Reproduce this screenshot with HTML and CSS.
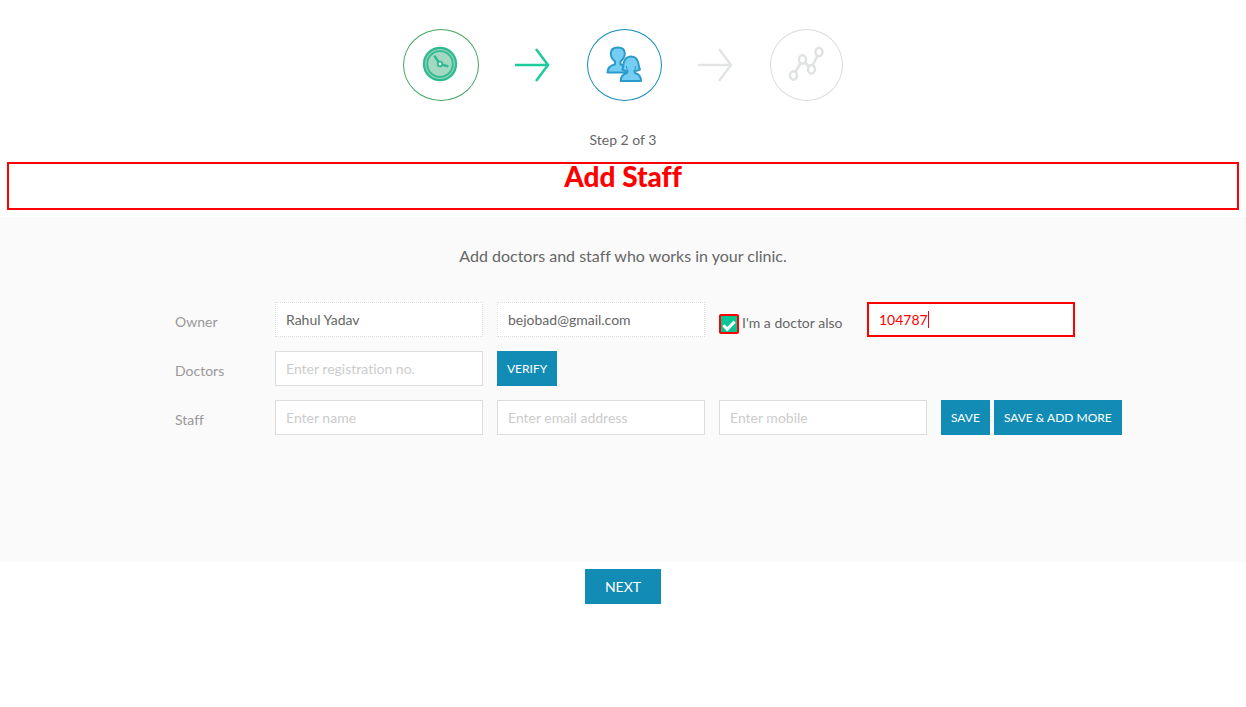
FILE: index.html
```html
<!DOCTYPE html>
<html lang="en">
<head>
<meta charset="utf-8">
<title>Add Staff</title>
<link rel="stylesheet" href="styles.css">
</head>
<body>
<header class="steps">
  <span class="step step-done">
    <svg width="36" height="36" viewBox="0 0 36 36" fill="none" stroke="#2fba91">
      <circle cx="18" cy="18" r="16" fill="#a3d9c3" stroke-width="2.4"/>
      <circle cx="18" cy="18" r="14.3" stroke="#8fd3b9" stroke-width="1"/>
      <circle cx="18" cy="18" r="12.8" stroke-width="1.8"/>
      <path d="M17 16.500L12.800 10.500M19.500 18.500L25.500 20.200" stroke-width="2.400" stroke-linecap="round"/>
      <circle cx="18" cy="18" r="2.300" fill="#e6f7f0" stroke-width="1.800"/>
    </svg>
  </span>
  <svg class="arrow arrow-done" width="36" height="36" viewBox="0 0 36 36"><path d="M0 18H33M21 2L33 18L21 34"/></svg>
  <span class="step step-current">
    <svg width="36" height="36" viewBox="0 0 36 36" fill="#74cdf2" stroke="#2a9bc8" stroke-width="2" stroke-linejoin="round">
      <path d="M1.500 26.500C1.500 21.500 4 19.500 9 18.200V15.500C6.500 13.500 4.800 10.500 4.800 7.500C4.800 3.500 7.500 1.500 11.800 1.500S18.800 3.500 18.800 7.500C18.800 10.500 17 13.500 14.500 15.500V18.200C18 19 21 20.500 21 26.500Z"/>
      <path d="M14.700 35C14.700 30.500 17 28.200 21 27L21.500 25C19.500 25 17.500 24.500 16.300 23.500C17.800 21 17 19 17.800 16.500C19 12.500 21.500 10.500 25 10.500S31.200 12.500 32.200 16.500C33 19 32.500 21 34 23.500C32.500 24.500 31 25 28.500 25L29 27C33 28.200 35 30.500 35 35Z"/>
      <path d="M20.500 20C20.600 22.500 21 24 22 25.500M29.500 20C29.400 22.500 29 24 28 25.500" fill="none" stroke-width="1"/>
    </svg>
  </span>
  <svg class="arrow" width="36" height="36" viewBox="0 0 36 36"><path d="M0 18H33M21 2L33 18L21 34"/></svg>
  <span class="step">
    <svg width="36" height="36" viewBox="0 0 36 36" fill="none" stroke="#e1e3e3" stroke-width="2.600">
      <ellipse cx="5.500" cy="29.500" rx="3.500" ry="4.200"/>
      <ellipse cx="14.500" cy="13.500" rx="3.500" ry="4.200"/>
      <ellipse cx="23.500" cy="23.300" rx="3.500" ry="4.200"/>
      <ellipse cx="31" cy="6" rx="3.500" ry="4.200"/>
      <path d="M7.500 25.500L12.500 17.500M17 16.500L21 20.500M25 19L29.300 10"/>
    </svg>
  </span>
</header>
<p class="step-count">Step 2 of 3</p>
<h1 class="title">Add Staff</h1>
<main class="panel">
  <p class="intro">Add doctors and staff who works in your clinic.</p>
  <form class="staff-form" id="staff-form">
    <div class="row">
      <label class="row-label" for="owner">Owner</label>
      <input class="field field-fixed" id="owner" type="text" value="Rahul Yadav" readonly>
      <input class="field field-fixed" type="email" aria-label="Owner email" value="bejobad@gmail.com" readonly>
      <div class="doctor">
        <input class="check" id="also" type="checkbox" checked>
        <label class="check-label" for="also">I'm a doctor also</label>
      </div>
      <div class="active">
        <input class="field field-active" type="text" aria-label="Owner registration no." value="104787">
        <span class="caret"></span>
      </div>
    </div>
    <div class="row">
      <label class="row-label" for="doctors">Doctors</label>
      <input class="field" id="doctors" type="text" placeholder="Enter registration no.">
      <button class="button" type="button">VERIFY</button>
    </div>
    <div class="row">
      <label class="row-label" for="staff">Staff</label>
      <input class="field" id="staff" type="text" placeholder="Enter name">
      <input class="field" type="email" aria-label="Staff email" placeholder="Enter email address">
      <input class="field" type="tel" aria-label="Staff mobile" placeholder="Enter mobile">
      <div class="actions">
        <button class="button" type="button">SAVE</button>
        <button class="button" type="button">SAVE &amp; ADD MORE</button>
      </div>
    </div>
  </form>
</main>
<footer class="footer">
  <button class="button button-next" type="submit" form="staff-form">NEXT</button>
</footer>
</body>
</html>
```
FILE: styles.css
```css
* { box-sizing: border-box; }
body {
  margin: 0;
  background: #fff;
  color: #666;
  font-family: Lato, sans-serif;
  font-size: 14px;
  line-height: 20px;
  font-variant-ligatures: none;
}
input, button { font: inherit; font-variant-ligatures: none; }
.steps {
  display: flex;
  justify-content: center;
  align-items: center;
  gap: 36px;
  padding-top: 29px;
}
.step {
  display: flex;
  justify-content: center;
  align-items: center;
  width: 73px;
  height: 72px;
  border: 1px solid #dcdcdc;
  border-radius: 50%;
}
.step svg { margin: 0 2px 2px 0; }
.step-done { width: 76px; border-color: #3fa75f; }
.step-current { width: 75px; border-color: #128bb5; }
.arrow { fill: none; stroke: #e3e5e5; stroke-width: 2.5; }
.arrow-done { stroke: #1dcb9d; }
.step-count { margin: 29px 0 12px; text-align: center; }
.title {
  margin: 0 7px;
  padding-bottom: 20px;
  border: 2px solid #f00;
  color: #f00;
  font-family: "Lato Black", Lato, sans-serif;
  font-size: 28px;
  font-weight: 900;
  line-height: 24px;
  text-align: center;
}
.panel {
  margin-top: 7px;
  padding: 28px 0 127px;
  background: #fafafa;
}
.intro {
  margin: 0 0 35px;
  font-size: 16px;
  line-height: 22px;
  text-align: center;
}
.staff-form {
  display: flex;
  flex-direction: column;
  gap: 14px;
  padding-left: 175px;
}
.row { display: flex; gap: 14px; height: 35px; }
.row-label { width: 86px; padding-top: 10px; color: #999; }
.field {
  width: 208px;
  height: 35px;
  padding: 0 10px;
  border: 1px solid #ddd;
  border-radius: 0;
  background: #fff;
  color: #666;
  outline: 0;
}
.field::placeholder { color: #ccc; opacity: 1; }
.field-fixed { border-style: dotted; }
.doctor {
  display: flex;
  align-items: center;
  gap: 3px;
  width: 134px;
  padding-top: 8px;
}
.check {
  appearance: none;
  position: relative;
  width: 20px;
  height: 20px;
  margin: 0;
  border: 2px solid #f00;
  border-radius: 2px;
  background: #08c694;
}
.check:checked::after {
  content: "";
  position: absolute;
  box-sizing: border-box;
  left: 2px;
  top: 5px;
  width: 12px;
  height: 7px;
  border: solid #fff;
  border-width: 0 0 3px 3px;
  transform: rotate(-45deg);
}
.check-label { padding-bottom: 2px; }
.active { position: relative; }
.field-active { border: 2px solid #f00; color: #f00; }
.caret {
  position: absolute;
  left: 61px;
  top: 9px;
  width: 1px;
  height: 17px;
  background: #f00;
}
.button {
  height: 35px;
  padding: 0 10px;
  border: 0;
  background: #128bb5;
  color: #fff;
  font-size: 12px;
  white-space: nowrap;
}
.actions { display: flex; gap: 4px; }
.footer { padding-top: 7px; text-align: center; }
.button-next { padding: 0 20px; font-size: 14px; }
```
